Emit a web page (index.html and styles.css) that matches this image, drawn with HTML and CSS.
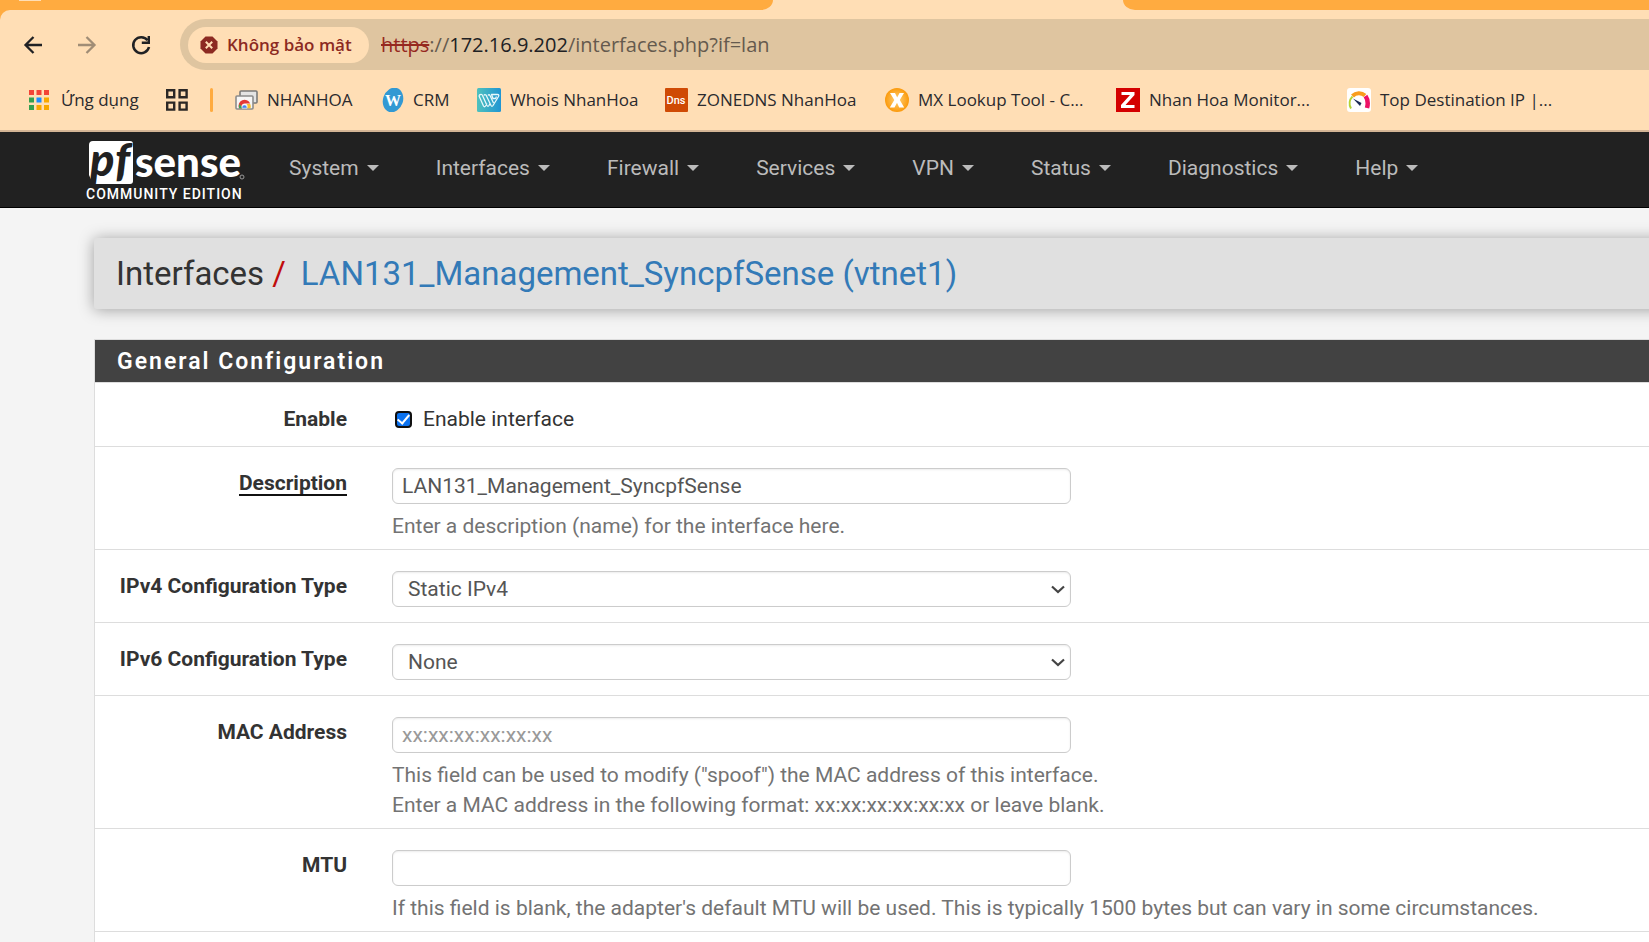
FILE: index.html
```html
<!DOCTYPE html>
<html lang="vi">
<head>
<meta charset="utf-8">
<meta name="viewport" content="width=device-width, initial-scale=1">
<title>pfSense - Interfaces: LAN131_Management_SyncpfSense (vtnet1)</title>
<link rel="stylesheet" href="styles.css">
</head>
<body>
<div class="browser">
  <div class="tabs">
    <div class="tabs-left"><span class="tab-hint"></span></div>
    <div class="tab-active"></div>
    <div class="tabs-right"></div>
  </div>
  <div class="chrome">
    <div class="toolbar">
      <button class="tool" type="button" aria-label="Back"><svg width="24" height="24" viewBox="0 0 24 24"><path d="M21 12H5M12.500 4L4.500 12l8 8" fill="none" stroke="#202124" stroke-width="2.300"/></svg></button>
      <button class="tool" type="button" aria-label="Forward"><svg width="24" height="24" viewBox="0 0 24 24"><path d="M3 12h16M11.500 4l8 8-8 8" fill="none" stroke="#a08d76" stroke-width="2.300"/></svg></button>
      <button class="tool" type="button" aria-label="Reload"><svg width="24" height="24" viewBox="0 0 24 24"><path d="M18.600 7.300A8 8 0 1 0 20 14" fill="none" stroke="#202124" stroke-width="2.500"/><path d="M19.800 3v6.800H12.800" fill="none" stroke="#202124" stroke-width="2.400"/></svg></button>
      <div class="omnibox">
        <button class="chip" type="button"><svg width="18" height="18" viewBox="0 0 18 18"><path d="M5.500.5h7l5 5v7l-5 5h-7l-5-5v-7z" fill="#8c2a22"/><path d="M5.800 5.800l6.400 6.400M12.200 5.800l-6.400 6.400" stroke="#ffdeb5" stroke-width="2"/></svg>Không bảo mật</button>
        <div class="url"><s>https</s>://<b>172.16.9.202</b>/interfaces.php?if=lan</div>
      </div>
    </div>
    <nav class="bookmarks" aria-label="Bookmarks">
      <a href="#" class="apps"><svg width="20" height="20" viewBox="0 0 20 20"><path fill="#f44336" d="M0 0h5v5H0zM7.500 0h5v5h-5zM15 0h5v5h-5z"/><path fill="#34a04f" d="M0 7.500h5v5H0zM0 15h5v5H0z"/><path fill="#1a8cff" d="M7.500 7.500h5v5h-5z"/><path fill="#f9a800" d="M15 7.500h5v5h-5zM7.500 15h5v5h-5zM15 15h5v5h-5z"/></svg>Ứng dụng</a>
      <a href="#" aria-label="Tab groups"><svg width="22" height="22" viewBox="0 0 22 22"><path fill="none" stroke="#2b2725" stroke-width="2.400" d="M1.200 1.200h7v7h-7zM13.600 1.200h7v7h-7zM1.200 13.600h7v7h-7zM13.600 13.600h7v7h-7z"/></svg></a>
      <span class="divider"></span>
      <a href="#"><svg width="23" height="24" viewBox="0 0 23 24"><rect x="5" y="3" width="17" height="12" rx="1" fill="#e4e4e4" stroke="#7a7a7a" stroke-width="1.600"/><rect x="1" y="8" width="17" height="13" rx="1" fill="#f6f6f6" stroke="#8c8c8c" stroke-width="1.600"/><path d="M4 20.200a6 6 0 0 1 11.200-4.700h-5.700a3 3 0 0 0-2.500 4.700z" fill="#e53935"/><path d="M4 20.200a6 6 0 0 1 .6-4.200l3 4.200z" fill="#34a853"/><path d="M11.500 20.200a3 3 0 0 0 0-4.200h3.700a6 6 0 0 1 .4 4.200z" fill="#fbc02d"/><path d="M7 20.200a2.600 2.600 0 1 1 5 0z" fill="#4285f4" stroke="#fff" stroke-width=".6"/></svg>NHANHOA</a>
      <a href="#"><svg width="22" height="24" viewBox="0 0 22 24"><ellipse cx="11" cy="12" rx="10" ry="12.500" transform="rotate(18 11 12)" fill="#3299d3"/><text x="11" y="18" text-anchor="middle" class="mark mark-w">W</text></svg>CRM</a>
      <a href="#"><svg width="24" height="24" viewBox="0 0 24 24"><defs><linearGradient id="teal"><stop offset="0" stop-color="#4fc1bd"/><stop offset="1" stop-color="#2095d3"/></linearGradient></defs><rect width="24" height="24" rx="1.500" fill="url(#teal)"/><path d="M3.500 6.500q-2 .5-1 2.500l4 9q1 1.500 2 0l1.500-2.500M3.500 6.500q1.500-.5 2 1l4.500 10q1 1.500 2 0l1-2M7 7.500q.5-1.500 2-.5l5 10.500q1 1.500 2 0l5.500-9q1-2-1-2H14.500l1.500 4h2.500l1-2M11 7.500q1-1.500 2 0l3.500 7.500" fill="none" stroke="#e9f8fb" stroke-width="1.300" stroke-linejoin="round"/></svg>Whois NhanHoa</a>
      <a href="#"><svg width="23" height="24" viewBox="0 0 23 24"><rect width="23" height="24" rx="1" fill="#cf4a05"/><text x="11" y="16" text-anchor="middle" class="mark mark-dns">Dns</text></svg>ZONEDNS NhanHoa</a>
      <a href="#"><svg width="24" height="24" viewBox="0 0 24 24"><defs><radialGradient id="amber"><stop offset="0" stop-color="#ffd27a"/><stop offset="1" stop-color="#fb9a0c"/></radialGradient></defs><circle cx="12" cy="12" r="12" fill="url(#amber)"/><path d="M5 5h5l2.200 4.500L14.500 5h4.500l-4.200 7 4.400 7.500h-5L12 14.800 9.500 19.500H4.800l4.500-7.500z" fill="#fff"/></svg>MX Lookup Tool - C...</a>
      <a href="#"><svg width="24" height="24" viewBox="0 0 24 24"><rect width="24" height="24" fill="#d40000"/><path d="M5.500 4h13v3L9.500 17h9v3h-13.500v-3l9-10h-8.500z" fill="#fff"/></svg>Nhan Hoa Monitor...</a>
      <a href="#"><svg width="24" height="24" viewBox="0 0 24 24"><rect width="24" height="24" rx="3" fill="#fff"/><path d="M4 20.500a10 10 0 0 1 1.500-12" fill="none" stroke="#b5d334" stroke-width="2"/><path d="M5.500 8a9 9 0 0 1 12.500-.5" fill="none" stroke="#f99d1c" stroke-width="4"/><path d="M18.500 8q3.500 5 1.500 12" fill="none" stroke="#ee1166" stroke-width="4.500"/><path d="M6 10.500l8.500 4.500-1.500 3z" fill="#1b2a55"/></svg>Top Destination IP |...</a>
    </nav>
  </div>
</div>
<header class="navbar">
  <a class="brand" href="#" aria-label="pfSense Community Edition">
    <svg width="160" height="44" viewBox="0 0 160 44"><path d="M4 0H41a3 3 0 0 1 3 3V40a3 3 0 0 1-3 3H4L0 34V4a4 4 0 0 1 4-4z" fill="#fff"/><text x="1" y="35" class="logo-pf">p</text><text x="26" y="35" class="logo-pf">f</text><text x="46" y="36" class="logo-sense">sense</text><circle cx="153" cy="36" r="2" fill="none" stroke="#999" stroke-width="1"/></svg>
    <span class="edition">COMMUNITY EDITION</span>
  </a>
  <nav class="menu">
    <a href="#">System</a>
    <a href="#">Interfaces</a>
    <a href="#">Firewall</a>
    <a href="#">Services</a>
    <a href="#">VPN</a>
    <a href="#">Status</a>
    <a href="#">Diagnostics</a>
    <a href="#">Help</a>
  </nav>
</header>
<main class="content">
  <h1 class="crumbs"><span>Interfaces</span><i>/</i><a href="#">LAN131_Management_SyncpfSense (vtnet1)</a></h1>
  <form class="panel">
    <h2 class="panel-title">General Configuration</h2>
    <div class="row row-check">
      <label class="name" for="enable">Enable</label>
      <div class="field"><label class="check"><input type="checkbox" id="enable" checked>Enable interface</label></div>
    </div>
    <div class="row row-help">
      <label class="name" for="descr"><span class="required">Description</span></label>
      <div class="field">
        <input class="control" type="text" id="descr" value="LAN131_Management_SyncpfSense">
        <p class="help">Enter a description (name) for the interface here.</p>
      </div>
    </div>
    <div class="row">
      <label class="name" for="type4">IPv4 Configuration Type</label>
      <div class="field"><div class="pick"><select class="control" id="type4"><option>Static IPv4</option></select><svg class="arrow" width="14" height="9" viewBox="0 0 14 9"><path d="M1 1.500l6 5.500 6-5.500" fill="none" stroke="#444" stroke-width="2.200"/></svg></div></div>
    </div>
    <div class="row">
      <label class="name" for="type6">IPv6 Configuration Type</label>
      <div class="field"><div class="pick"><select class="control" id="type6"><option>None</option></select><svg class="arrow" width="14" height="9" viewBox="0 0 14 9"><path d="M1 1.500l6 5.500 6-5.500" fill="none" stroke="#444" stroke-width="2.200"/></svg></div></div>
    </div>
    <div class="row row-help">
      <label class="name" for="mac">MAC Address</label>
      <div class="field">
        <input class="control" type="text" id="mac" placeholder="xx:xx:xx:xx:xx:xx">
        <p class="help">This field can be used to modify ("spoof") the MAC address of this interface.<br>Enter a MAC address in the following format: xx:xx:xx:xx:xx:xx or leave blank.</p>
      </div>
    </div>
    <div class="row row-help">
      <label class="name" for="mtu">MTU</label>
      <div class="field">
        <input class="control" type="text" id="mtu">
        <p class="help">If this field is blank, the adapter's default MTU will be used. This is typically 1500 bytes but can vary in some circumstances.</p>
      </div>
    </div>
    <div class="row row-next"></div>
  </form>
</main>
</body>
</html>
```
FILE: styles.css
```css
* { box-sizing: border-box; }
body {
  margin: 0;
  min-height: 100vh;
  overflow: hidden;
  display: flex;
  flex-direction: column;
  background: #f4f4f4;
  color: #333;
  font: 21px/30px Roboto, sans-serif;
}
a { color: inherit; text-decoration: none; }
svg { flex: none; }

/* Browser window */
.browser {
  background: #ffab40;
  color: #2a2a2e;
  font: 18px/24px "Open Sans", "Noto Sans", sans-serif;
}
.tabs { display: flex; height: 10px; background: #ffdeb5; }
.tabs-left { width: 773px; background: #ffab40; border-bottom-right-radius: 12px 10px; }
.tab-hint { display: block; width: 22px; height: 1px; margin-left: 19px; background: #ffdeb5; }
.tab-active { width: 350px; }
.tabs-right { flex: 1; background: #ffab40; border-bottom-left-radius: 12px 10px; }
.chrome {
  height: 122px;
  padding-top: 9px;
  background: #ffdeb5;
  border-radius: 10px 0 0 0;
  border-bottom: 2px solid #d3b595;
}
.toolbar { display: flex; align-items: center; padding-left: 21px; }
.tool {
  width: 24px;
  height: 24px;
  margin-right: 30px;
  padding: 0;
  border: 0;
  background: none;
}
.tool svg { display: block; }
.omnibox {
  flex: 1;
  display: flex;
  align-items: center;
  gap: 12px;
  height: 51px;
  margin-left: -3px;
  padding-left: 8px;
  border-radius: 26px 0 0 26px;
  background: #dfc5a0;
}
.chip {
  display: flex;
  align-items: center;
  gap: 9px;
  width: 181px;
  height: 36px;
  padding: 0 0 0 12px;
  border: 0;
  border-radius: 18px;
  background: #ffdeb5;
  color: #8c2a22;
  font: 600 17px/24px "Open Sans", "Noto Sans", sans-serif;
  white-space: nowrap;
}
.url { color: #655a4e; font-size: 20px; line-height: 28px; white-space: nowrap; }
.url s { color: #96291f; }
.url b { color: #202124; font-weight: 400; }
.bookmarks {
  display: grid;
  grid-template-columns: 137px 44px 25px 147px 95px 188px 220px 231px 231px auto;
  align-items: center;
  height: 60px;
  padding-left: 29px;
}
.bookmarks a { display: flex; align-items: center; gap: 9px; font-size: 17px; white-space: nowrap; }
.bookmarks .apps { gap: 12px; }
.divider { width: 3px; height: 24px; border-radius: 2px; background: #ffab40; }
.mark { fill: #fff; }
.mark-w { font: 700 16px "Liberation Serif", serif; }
.mark-dns { font: 500 11px Roboto, sans-serif; }

/* Site navigation */
.navbar {
  display: flex;
  height: 76px;
  padding-left: 86px;
  background: #212121;
  border-bottom: 1px solid #000;
}
.brand { display: block; width: 175px; padding-top: 9px; color: #fff; }
.brand svg { display: block; margin-left: 3px; overflow: visible; }
.logo-pf { font: italic 900 45px Lato, sans-serif; fill: #212121; }
.logo-sense { font: 900 42px Lato, sans-serif; fill: #fff; }
.edition { display: block; font-size: 14px; line-height: 18px; font-weight: 500; letter-spacing: 1px; white-space: nowrap; }
.menu { display: flex; height: 72px; }
.menu a { display: flex; align-items: center; gap: 8px; padding: 0 29px 0 28px; color: #bbb; }
.menu a::after {
  content: "";
  border: 6px solid transparent;
  border-top-color: #bbb;
  border-bottom: 0;
}

/* Page body */
.content { flex: 1; display: flex; flex-direction: column; padding: 30px 0 0 94px; }
.crumbs {
  display: flex;
  align-items: center;
  height: 71px;
  margin: 0 -30px 30px 0;
  padding-left: 22px;
  border-radius: 3px 0 0 3px;
  background: #e0e0e0;
  box-shadow: 0 1px 15px rgba(0, 0, 0, 0.35);
  font-size: 33px;
  line-height: 36px;
  font-weight: 400;
}
.crumbs i { margin: 0 15px 0 8px; color: #c00d0d; font-style: normal; }
.crumbs a { color: #337ab7; }
.panel {
  flex: 1;
  border: solid #ddd;
  border-width: 1px 0 0 1px;
  background: #fff;
}
.panel-title {
  margin: 0;
  padding: 7px 22px 5px;
  background: #424242;
  color: #fff;
  font-size: 23px;
  line-height: 30px;
  font-weight: 600;
  letter-spacing: 2px;
}
.row {
  display: grid;
  grid-template-columns: 252px minmax(0, 1fr);
  gap: 45px;
  padding: 21px 0 15px;
  border-top: 1px solid #ddd;
}
.row-check { padding-bottom: 12px; }
.row-help { padding-bottom: 8px; }
.name { height: 30px; text-align: right; font-weight: 700; white-space: nowrap; }
.required { border-bottom: 2px solid #111; line-height: 22px; display: inline-block; }
.check { display: flex; align-items: center; gap: 11px; }
.check input {
  appearance: none;
  display: grid;
  place-content: center;
  width: 17px;
  height: 17px;
  margin: 0 0 0 3px;
  border: 2px solid #101010;
  border-radius: 4px;
  background: #fff;
}
.check input:checked { background: #0b72f0; }
.check input:checked::after {
  content: "";
  width: 5px;
  height: 10px;
  margin-bottom: 2px;
  border: solid #fff;
  border-width: 0 2px 2px 0;
  transform: rotate(40deg);
}
.control {
  display: block;
  width: 100%;
  max-width: 679px;
  height: 36px;
  padding: 0 9px;
  border: 1px solid #ccc;
  border-radius: 6px;
  background: #fff;
  box-shadow: inset 0 1px 2px rgba(0, 0, 0, 0.08);
  color: #555;
  font: 21px/30px Roboto, sans-serif;
}
.control::placeholder { color: #999; opacity: 1; }
.pick { position: relative; max-width: 679px; }
.pick .control { appearance: none; padding-left: 15px; }
.arrow { position: absolute; right: 6px; top: 14px; pointer-events: none; }
.help { margin: 7px 0 0; color: #737373; }
```
